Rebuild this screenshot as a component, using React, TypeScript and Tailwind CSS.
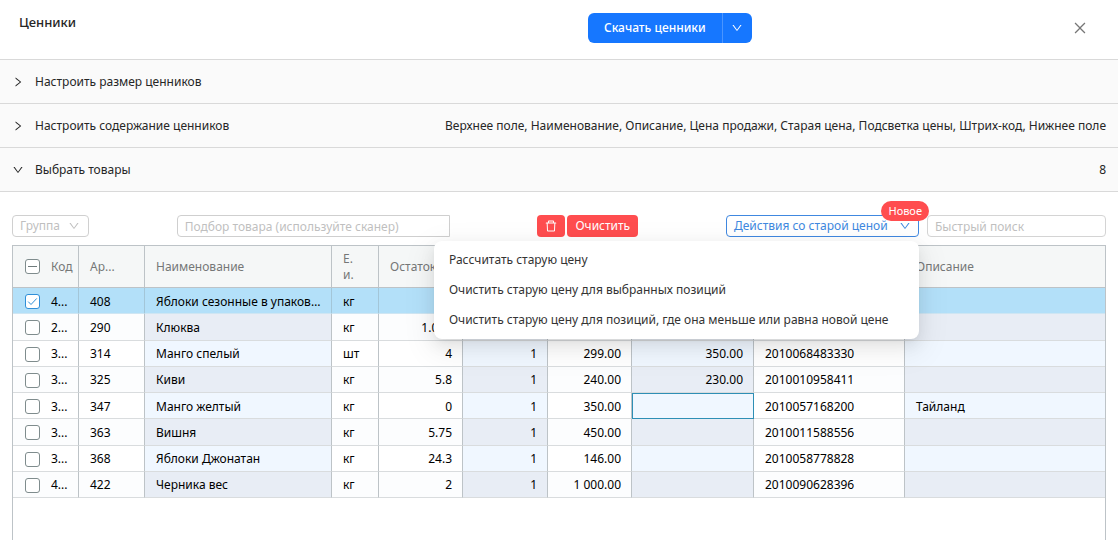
import { useState } from "react";
import {
  AiOutlineClose,
  AiOutlineDelete,
  AiOutlineDown,
  AiOutlineRight,
} from "react-icons/ai";

type Product = {
  id: number;
  code: string;
  article: string;
  name: string;
  unit: string;
  stock: string;
  count: string;
  price: string;
  oldPrice: string;
  barcode: string;
  description: string;
};

const products: Product[] = [
  { id: 1, code: "4...", article: "408", name: "Яблоки сезонные в упаковке", unit: "кг", stock: "", count: "", price: "", oldPrice: "", barcode: "", description: "" },
  { id: 2, code: "2...", article: "290", name: "Клюква", unit: "кг", stock: "1.005", count: "", price: "", oldPrice: "", barcode: "", description: "" },
  { id: 3, code: "3...", article: "314", name: "Манго спелый", unit: "шт", stock: "4", count: "1", price: "299.00", oldPrice: "350.00", barcode: "2010068483330", description: "" },
  { id: 4, code: "3...", article: "325", name: "Киви", unit: "кг", stock: "5.8", count: "1", price: "240.00", oldPrice: "230.00", barcode: "2010010958411", description: "" },
  { id: 5, code: "3...", article: "347", name: "Манго желтый", unit: "кг", stock: "0", count: "1", price: "350.00", oldPrice: "", barcode: "2010057168200", description: "Тайланд" },
  { id: 6, code: "3...", article: "363", name: "Вишня", unit: "кг", stock: "5.75", count: "1", price: "450.00", oldPrice: "", barcode: "2010011588556", description: "" },
  { id: 7, code: "3...", article: "368", name: "Яблоки Джонатан", unit: "кг", stock: "24.3", count: "1", price: "146.00", oldPrice: "", barcode: "2010058778828", description: "" },
  { id: 8, code: "4...", article: "422", name: "Черника вес", unit: "кг", stock: "2", count: "1", price: "1 000.00", oldPrice: "", barcode: "2010090628396", description: "" },
];

const columns: {
  key: Exclude<keyof Product, "id" | "code">;
  title: string;
  width: string;
  tinted?: boolean;
  right?: boolean;
}[] = [
  { key: "article", title: "Ар...", width: "w-[66px]" },
  { key: "name", title: "Наименование", width: "w-[187px]", tinted: true },
  { key: "unit", title: "Е. и.", width: "w-[47px]" },
  { key: "stock", title: "Остаток", width: "w-[84px]", right: true },
  { key: "count", title: "", width: "w-[85px]", tinted: true, right: true },
  { key: "price", title: "", width: "w-[84px]", right: true },
  { key: "oldPrice", title: "", width: "w-[122px]", tinted: true, right: true },
  { key: "barcode", title: "", width: "w-[151px]" },
  { key: "description", title: "Описание", width: "w-auto", tinted: true },
];

const menuItems = [
  "Рассчитать старую цену",
  "Очистить старую цену для выбранных позиций",
  "Очистить старую цену для позиций, где она меньше или равна новой цене",
];

const sections = [
  { title: "Настроить размер ценников", extra: "", open: false },
  {
    title: "Настроить содержание ценников",
    extra:
      "Верхнее поле, Наименование, Описание, Цена продажи, Старая цена, Подсветка цены, Штрих-код, Нижнее поле",
    open: false,
  },
  { title: "Выбрать товары", extra: "8", open: true },
];

function Checkbox({
  label,
  checked,
  partial,
  onChange,
}: {
  label: string;
  checked: boolean;
  partial?: boolean;
  onChange: () => void;
}) {
  return (
    <span className="relative block size-[15px] shrink-0">
      <input
        type="checkbox"
        aria-label={label}
        checked={checked}
        onChange={onChange}
        className="block size-[15px] appearance-none rounded-[3px] border border-[#7f8c8d] bg-white checked:border-[#2f8fd8]"
      />
      {(checked || partial) && (
        <svg
          viewBox="0 0 15 15"
          fill="none"
          stroke="currentColor"
          className={`pointer-events-none absolute inset-0 size-[15px] ${checked ? "text-[#2f8fd8]" : "text-[#6f7b7c]"}`}
          aria-hidden="true"
        >
          <path d={checked ? "M3.2 7.6 6 10.5 11.8 4.4" : "M3 7.5h9"} />
        </svg>
      )}
    </span>
  );
}

function cellColor(selected: boolean, tinted: boolean | undefined, odd: boolean) {
  if (selected) return "bg-[#b3e0f9] border-b-[#cfe6f3] border-r-[#a3c6d8]";
  if (tinted) {
    return odd
      ? "bg-[#e8edf5] border-b-[#d9dcde] border-r-[#bdc3c7]"
      : "bg-[#f0f7ff] border-b-[#d9dcde] border-r-[#bdc3c7]";
  }
  return odd
    ? "bg-[#fcfdfe] border-b-[#d9dcde] border-r-[#bdc3c7]"
    : "bg-white border-b-[#d9dcde] border-r-[#bdc3c7]";
}

function ProductTable() {
  const [selected, setSelected] = useState<number[]>([1]);
  const all = selected.length === products.length;

  const toggle = (id: number) => {
    setSelected((prev) =>
      prev.includes(id) ? prev.filter((item) => item !== id) : [...prev, id],
    );
  };

  return (
    <div className="flex-1 border border-b-0 border-[#bdc3c7]">
      <table className="h-[252px] w-full table-fixed border-separate border-spacing-0">
        <thead>
          <tr className="h-[42px] bg-[#f5f7f7] text-left text-[#757777]">
            <th className="w-[66px] border-r border-b border-[#bdc3c7] p-0 pl-3 font-normal">
              <div className="flex items-center gap-[11px]">
                <Checkbox
                  label="Выбрать все"
                  checked={all}
                  partial={selected.length > 0}
                  onChange={() => setSelected(all ? [] : products.map((p) => p.id))}
                />
                Код
              </div>
            </th>
            {columns.map((column) => (
              <th
                key={column.key}
                className={`${column.width} border-r border-b border-[#bdc3c7] py-0 pr-3 pl-[11px] leading-4 font-normal last:border-r-0`}
              >
                {column.title}
              </th>
            ))}
          </tr>
        </thead>
        <tbody>
          {products.map((product, index) => {
            const isSelected = selected.includes(product.id);
            const odd = index % 2 === 1;
            return (
              <tr key={product.id} className="h-[26px]">
                <td
                  className={`border-r border-b p-0 pt-0.5 pl-3 ${cellColor(isSelected, false, odd)}`}
                >
                  <div className="flex items-center gap-[11px]">
                    <Checkbox
                      label={product.name}
                      checked={isSelected}
                      onChange={() => toggle(product.id)}
                    />
                    {product.code}
                  </div>
                </td>
                {columns.map((column) => (
                  <td
                    key={column.key}
                    className={`truncate border-r border-b pt-0.5 pr-2.5 pb-0 pl-[11px] last:border-r-0 ${column.right ? "text-right" : ""} ${cellColor(isSelected, column.tinted, odd)} ${product.id === 5 && column.key === "oldPrice" ? "outline-1 -outline-offset-1 outline-[#2e8fb5]" : ""}`}
                  >
                    {product[column.key]}
                  </td>
                ))}
              </tr>
            );
          })}
        </tbody>
      </table>
    </div>
  );
}

function Toolbar() {
  const [isMenuOpen, setIsMenuOpen] = useState(true);

  return (
    <div className="flex items-center justify-between pb-2">
      <button
        type="button"
        className="flex h-[22px] w-[77px] items-center justify-between rounded border border-[#d0d0d0] pr-2 pl-[7px] text-[#bfbfbf]"
      >
        Группа
        <AiOutlineDown className="size-3" />
      </button>

      <input
        type="text"
        aria-label="Подбор товара"
        placeholder="Подбор товара (используйте сканер)"
        className="h-[22px] w-[273px] rounded-l border border-[#cfcfcf] px-[7px] placeholder:text-[#bfbfbf]"
      />

      <div className="flex gap-0.5 text-white">
        <button
          type="button"
          aria-label="Удалить"
          className="flex h-[22px] w-7 items-center justify-center rounded bg-[#ff4d4f]"
        >
          <AiOutlineDelete className="size-3.5" />
        </button>
        <button
          type="button"
          className="flex h-[22px] w-[71px] items-center justify-center rounded bg-[#ff4d4f]"
        >
          Очистить
        </button>
      </div>

      <div className="flex gap-2">
        <div className="relative">
          <button
            type="button"
            onClick={() => setIsMenuOpen((prev) => !prev)}
            aria-expanded={isMenuOpen}
            className="flex h-[22px] w-[193px] items-center justify-between rounded border border-[#4088e0] px-[7px] text-[#4088e0]"
          >
            Действия со старой ценой
            <AiOutlineDown className="size-3" />
          </button>
          <span className="absolute -top-3.5 -right-2.5 rounded-full bg-[#ff4d4f] px-[7px] text-[11px] leading-5 text-white">
            Новое
          </span>
          {isMenuOpen && (
            <ul
              role="menu"
              className="absolute top-full right-0 z-10 mt-1 w-[485px] rounded-lg bg-white p-1 whitespace-nowrap text-[#333] shadow-[0_6px_16px_0_rgba(0,0,0,0.08),0_3px_6px_-4px_rgba(0,0,0,0.12),0_9px_28px_8px_rgba(0,0,0,0.05)]"
            >
              {menuItems.map((item) => (
                <li key={item} role="none">
                  <button
                    type="button"
                    role="menuitem"
                    className="block w-full px-[11px] text-left leading-[30px]"
                  >
                    {item}
                  </button>
                </li>
              ))}
            </ul>
          )}
        </div>
        <input
          type="search"
          aria-label="Быстрый поиск"
          placeholder="Быстрый поиск"
          className="h-[22px] w-[179px] rounded border border-[#d4d4d4] px-[7px] placeholder:text-[#bfbfbf]"
        />
      </div>
    </div>
  );
}

export default function App() {
  return (
    <main className="flex min-h-screen flex-col bg-white font-['Noto_Sans','Open_Sans',sans-serif] text-xs text-black">
      <header className="grid grid-cols-[588fr_530fr] pb-4">
        <h1 className="pt-3.5 pl-[19px] text-[13px] font-medium text-[#262626]">Ценники</h1>
        <div className="flex items-center justify-between pt-[13px] pr-[30px]">
          <div className="flex h-[30px] rounded-md bg-[#1677ff] text-white">
            <button type="button" className="px-4 font-medium">
              Скачать ценники
            </button>
            <button
              type="button"
              aria-label="Ещё"
              className="flex w-[30px] items-center justify-center border-l border-[#4a95ff]"
            >
              <AiOutlineDown className="size-3" />
            </button>
          </div>
          <button type="button" aria-label="Закрыть" className="text-[#777]">
            <AiOutlineClose className="size-4" />
          </button>
        </div>
      </header>

      <div className="border-t border-[#d9d9d9] bg-[#fafafa] text-[#262626]">
        {sections.map((section) => (
          <button
            key={section.title}
            type="button"
            aria-expanded={section.open}
            className="flex h-11 w-full items-center border-b border-[#d9d9d9] px-3 text-left"
          >
            {section.open ? (
              <AiOutlineDown className="size-3" />
            ) : (
              <AiOutlineRight className="size-3" />
            )}
            <span className="pl-[11px]">{section.title}</span>
            <span className="ml-auto">{section.extra}</span>
          </button>
        ))}
      </div>

      <section className="flex flex-1 flex-col px-3 pt-[23px]">
        <Toolbar />
        <ProductTable />
      </section>
    </main>
  );
}
